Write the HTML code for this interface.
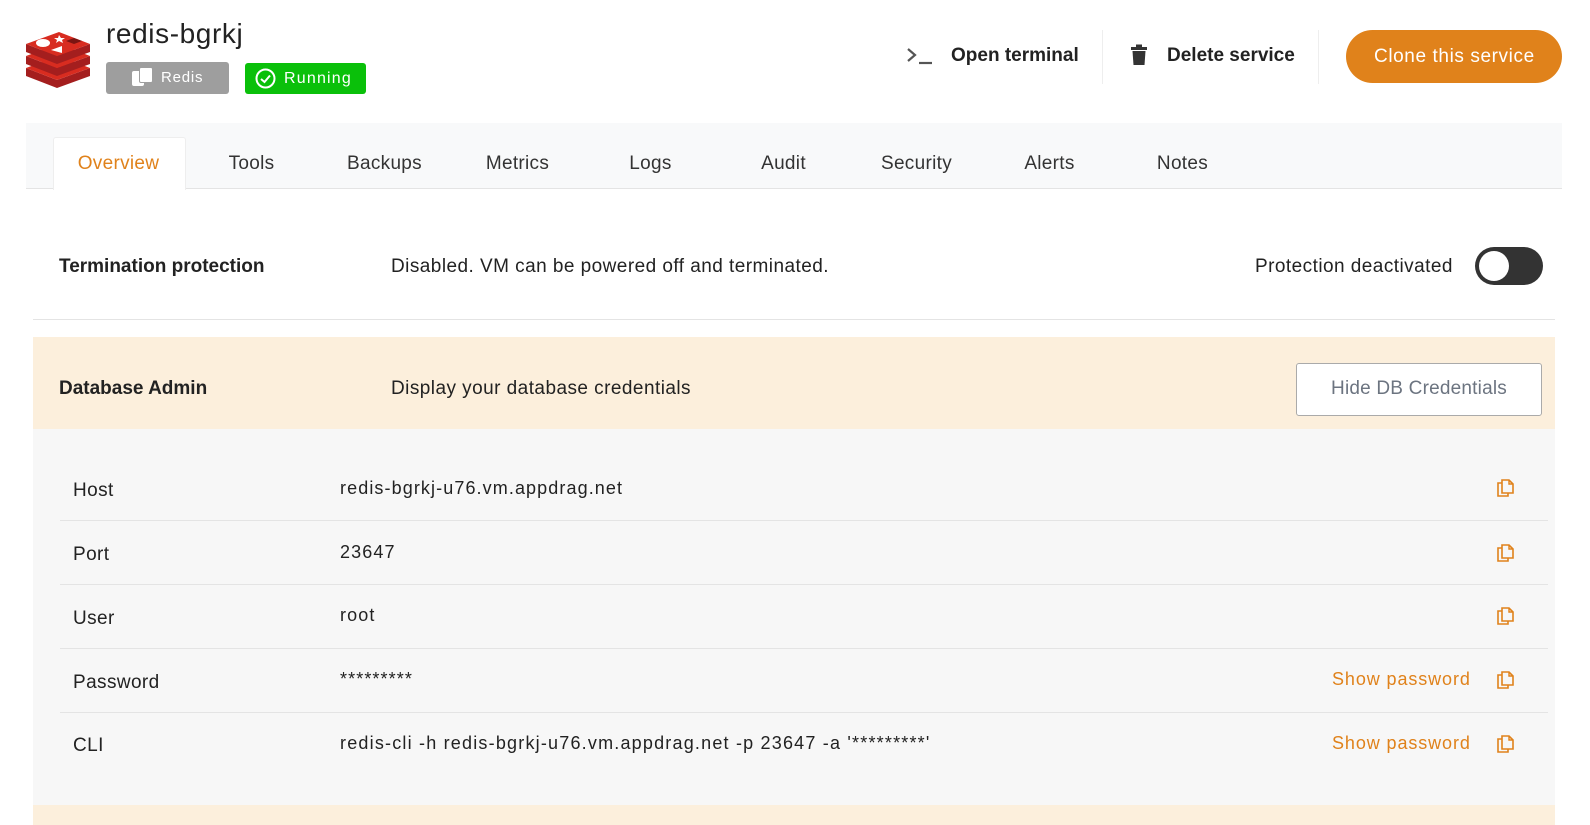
<!DOCTYPE html>
<html><head><meta charset="utf-8"><style>
*{margin:0;padding:0;box-sizing:border-box}
body{width:1590px;height:825px;background:#fff;font-family:"Liberation Sans",sans-serif;color:#222;position:relative;overflow:hidden}
.a{position:absolute;white-space:nowrap}
.tab{position:absolute;top:138px;height:51px;width:133px;text-align:center;line-height:51px;font-size:19px;color:#333;letter-spacing:.3px}
.lbl{font-size:19px;color:#222;letter-spacing:.4px}
.val{font-size:18px;color:#222;letter-spacing:1.1px}
.sp{font-size:18px;color:#e0821b;letter-spacing:.9px}
.line{position:absolute;left:60px;width:1488px;height:1px;background:#e4e4e4}
.t{letter-spacing:.45px}
</style></head><body>
<svg class="a" style="left:24px;top:28px" width="70" height="60" viewBox="0 0 70 60">
<path d="M2 40 L33 52 L66 40 L66 48 L33 60 L2 48Z" fill="#a41e1e"/>
<path d="M2 40 L35 28 L66 40 L33 52Z" fill="#d82c20"/>
<path d="M2 28 L33 40 L66 28 L66 36 L33 48 L2 36Z" fill="#a41e1e"/>
<path d="M2 28 L35 16 L66 28 L33 40Z" fill="#d82c20"/>
<path d="M2 16 L33 28 L66 16 L66 24 L33 36 L2 24Z" fill="#a41e1e"/>
<path d="M2 16 L35 4 L66 16 L33 28Z" fill="#d82c20"/>
<ellipse cx="19" cy="15" rx="7" ry="4" fill="#fff"/>
<path d="M35 7 L37 10 L41 10 L38 12 L39 15 L35 13 L32 15 L33 12 L30 10 L34 10Z" fill="#fff"/>
<path d="M27 22 L38 18 L38 25Z" fill="#fff"/>
<path d="M42 13 L50 10 L58 13 L50 16Z" fill="#7a1512"/>
</svg>
<div class="a" style="left:106px;top:18px;font-size:28px;color:#222;letter-spacing:.6px">redis-bgrkj</div>
<div class="a" style="left:106px;top:62px;width:123px;height:32px;background:#9e9e9e;border-radius:3px;color:#fff;font-size:15px;line-height:32px;padding-left:55px;letter-spacing:.8px">Redis
<div class="a" style="left:26px;top:9px;width:12px;height:15px;background:#fff;border-radius:2px"></div>
<div class="a" style="left:33px;top:5px;width:14px;height:16px;background:#fff;border:1.5px solid #9e9e9e;border-radius:2px"></div></div>
<div class="a" style="left:245px;top:63px;width:121px;height:31px;background:#0ac00a;border-radius:3px;color:#fff;font-size:16px;line-height:31px;padding-left:39px;letter-spacing:1.2px">Running
<svg class="a" style="left:10px;top:5px" width="21" height="21" viewBox="0 0 21 21"><circle cx="10.5" cy="10.5" r="9" fill="none" stroke="#fff" stroke-width="2"/><path d="M6 11 L9.5 14 L15 7.5" fill="none" stroke="#fff" stroke-width="2"/></svg></div>
<svg class="a" style="left:906px;top:46px" width="28" height="20" viewBox="0 0 28 20"><path d="M2 3 L9 9 L2 15" fill="none" stroke="#555" stroke-width="2.2"/><path d="M13 17 H26" stroke="#555" stroke-width="2.2"/></svg>
<div class="a" style="left:951px;top:45px;font-size:19px;font-weight:bold;color:#222">Open terminal</div>
<div class="a" style="left:1102px;top:30px;width:1px;height:54px;background:#eee"></div>
<svg class="a" style="left:1130px;top:44px" width="18" height="22" viewBox="0 0 18 22"><rect x="1" y="3" width="16" height="3" fill="#333"/><rect x="6" y="0.5" width="6" height="3" fill="#333"/><path d="M2.5 7 H15.5 L14.5 21 H3.5Z" fill="#333"/></svg>
<div class="a" style="left:1167px;top:45px;font-size:19px;font-weight:bold;color:#222">Delete service</div>
<div class="a" style="left:1318px;top:30px;width:1px;height:54px;background:#eee"></div>
<div class="a" style="left:1346px;top:30px;width:216px;height:53px;background:#e0821b;border-radius:27px;color:#fff;font-size:19px;line-height:53px;padding-left:28px;letter-spacing:.6px">Clone this service</div>
<div class="a" style="left:26px;top:123px;width:1536px;height:66px;background:#f8f9fa;border-bottom:1px solid #e4e4e4"></div>
<div class="a" style="left:53px;top:137px;width:133px;height:53px;background:#fff;border:1px solid #eee;border-bottom:none;border-radius:3px 3px 0 0"></div>
<div class="tab" style="left:52px;color:#e0821b">Overview</div>
<div class="tab" style="left:185px">Tools</div>
<div class="tab" style="left:318px">Backups</div>
<div class="tab" style="left:451px">Metrics</div>
<div class="tab" style="left:584px">Logs</div>
<div class="tab" style="left:717px">Audit</div>
<div class="tab" style="left:850px">Security</div>
<div class="tab" style="left:983px">Alerts</div>
<div class="tab" style="left:1116px">Notes</div>
<div class="a" style="left:59px;top:256px;font-size:19px;font-weight:bold">Termination protection</div>
<div class="a t" style="left:391px;top:256px;font-size:19px">Disabled. VM can be powered off and terminated.</div>
<div class="a t" style="left:1255px;top:256px;font-size:19px">Protection deactivated</div>
<div class="a" style="left:1475px;top:247px;width:68px;height:38px;background:#333;border-radius:19px"><div class="a" style="left:4px;top:4px;width:30px;height:30px;background:#fff;border-radius:50%"></div></div>
<div class="a" style="left:33px;top:319px;width:1522px;height:1px;background:#e4e4e4"></div>
<div class="a" style="left:33px;top:337px;width:1522px;height:92px;background:#fcefdc"></div>
<div class="a" style="left:59px;top:378px;font-size:19px;font-weight:bold">Database Admin</div>
<div class="a t" style="left:391px;top:378px;font-size:19px">Display your database credentials</div>
<div class="a" style="left:1296px;top:363px;width:246px;height:53px;background:#fff;border:1px solid #aaa;border-radius:3px;text-align:center;line-height:50px;font-size:19px;color:#6c7480;letter-spacing:.2px">Hide DB Credentials</div>
<div class="a" style="left:33px;top:429px;width:1522px;height:376px;background:#f7f7f7"></div>
<div class="a" style="left:33px;top:805px;width:1522px;height:20px;background:#fcefdc"></div>
<div class="line" style="top:520px"></div><div class="line" style="top:584px"></div><div class="line" style="top:648px"></div><div class="line" style="top:712px"></div>
<div class="a lbl" style="left:73px;top:480px">Host</div><div class="a val" style="left:340px;top:478px">redis-bgrkj-u76.vm.appdrag.net</div>
<div class="a lbl" style="left:73px;top:544px">Port</div><div class="a val" style="left:340px;top:542px">23647</div>
<div class="a lbl" style="left:73px;top:608px">User</div><div class="a val" style="left:340px;top:605px">root</div>
<div class="a lbl" style="left:73px;top:672px">Password</div><div class="a val" style="left:340px;top:669px">*********</div>
<div class="a lbl" style="left:73px;top:735px">CLI</div><div class="a val" style="left:340px;top:733px;letter-spacing:1.2px">redis-cli -h redis-bgrkj-u76.vm.appdrag.net -p 23647 -a '*********'</div>
<div class="a sp" style="left:1332px;top:669px">Show password</div>
<div class="a sp" style="left:1332px;top:733px">Show password</div>
<svg width="0" height="0" style="position:absolute"><defs><g id="cp"><path d="M4.5 4 H1 V17 H11 V14" fill="none" stroke="#e0821b" stroke-width="1.6"/><path d="M5 1 H12 L16 5 V14 H5Z" fill="none" stroke="#e0821b" stroke-width="1.6"/><path d="M12 1 V5 H16" fill="none" stroke="#e0821b" stroke-width="1.4"/></g></defs></svg>
<svg class="a" style="left:1497px;top:479px" width="18" height="19"><use href="#cp"/></svg>
<svg class="a" style="left:1497px;top:544px" width="18" height="19"><use href="#cp"/></svg>
<svg class="a" style="left:1497px;top:607px" width="18" height="19"><use href="#cp"/></svg>
<svg class="a" style="left:1497px;top:671px" width="18" height="19"><use href="#cp"/></svg>
<svg class="a" style="left:1497px;top:735px" width="18" height="19"><use href="#cp"/></svg>
</body></html>
